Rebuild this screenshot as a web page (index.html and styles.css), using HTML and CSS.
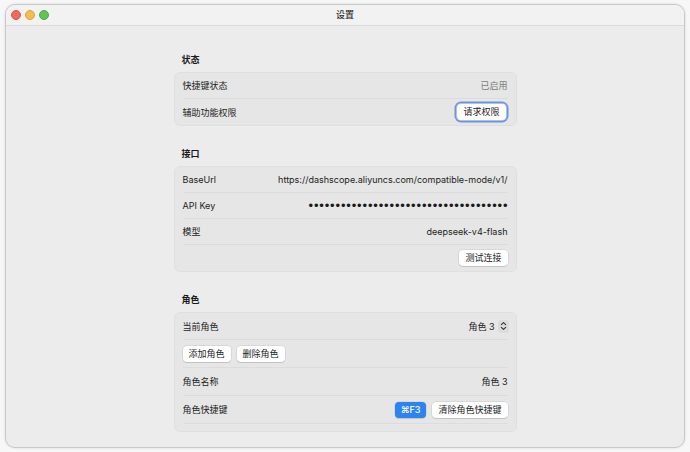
FILE: index.html
```html
<!DOCTYPE html>
<html lang="zh">
<head>
<meta charset="utf-8">
<link rel="stylesheet" href="styles.css">
</head>
<body>
<div class="window">
  <div class="titlebar">
    <div class="lights"><span class="light red"></span><span class="light yellow"></span><span class="light green"></span></div>
    <div class="title">设置</div>
    <div></div>
  </div>
  <div class="content">
    <section class="group">
      <h2 class="group-title">状态</h2>
      <div class="card">
        <div class="row"><span>快捷键状态</span><span class="muted">已启用</span></div>
        <div class="row"><span>辅助功能权限</span><button class="btn focus">请求权限</button></div>
      </div>
    </section>
    <section class="group">
      <h2 class="group-title">接口</h2>
      <div class="card">
        <div class="row"><span>BaseUrl</span><span>https://dashscope.aliyuncs.com/compatible-mode/v1/</span></div>
        <div class="row"><span>API Key</span><span class="dots">•••••••••••••••••••••••••••••••••••••</span></div>
        <div class="row"><span>模型</span><span>deepseek-v4-flash</span></div>
        <div class="row end"><button class="btn">测试连接</button></div>
      </div>
    </section>
    <section class="group">
      <h2 class="group-title">角色</h2>
      <div class="card roles">
        <div class="row first"><span>当前角色</span>
          <span class="popup">角色 3 <span class="stepper"><svg width="9" height="10" viewBox="0 0 9 10"><path d="M2.3 3.6 L4.5 1.6 L6.7 3.6 M2.3 6.4 L4.5 8.4 L6.7 6.4" fill="none" stroke="#333" stroke-width="1.1" stroke-linecap="round" stroke-linejoin="round"/></svg></span></span>
        </div>
        <div class="row start tall"><button class="btn">添加角色</button><button class="btn">删除角色</button></div>
        <div class="row tall"><span>角色名称</span><span>角色 3</span></div>
        <div class="row tall"><span>角色快捷键</span><span class="actions"><button class="btn blue">⌘F3</button><button class="btn">清除角色快捷键</button></span></div>
        <div class="tail"></div>
      </div>
    </section>
  </div>
</div>
</body>
</html>
```

FILE: styles.css
```css
* { box-sizing: border-box; }
html, body { margin: 0; padding: 0; }
body {
  background: #f7f7f7;
  font-family: "Inter", "Noto Sans CJK SC", sans-serif;
  font-size: 9px;
  color: #1c1c1c;
  width: 690px;
  height: 452px;
  overflow: hidden;
  padding: 4px 5px 4px 5px;
}
.window {
  width: 680px;
  height: 444px;
  border: 1px solid #c9c9c9;
  border-radius: 10px;
  background: #ececec;
  overflow: hidden;
  box-shadow: 0 0 3px rgba(0,0,0,0.12);
  display: flex;
  flex-direction: column;
}
.titlebar {
  height: 21px;
  flex: none;
  background: #f2f2f2;
  border-bottom: 1px solid #dadada;
  display: grid;
  grid-template-columns: 1fr auto 1fr;
  align-items: center;
}
.lights {
  display: flex;
  gap: 4px;
  padding-left: 5px;
}
.light {
  width: 10px;
  height: 10px;
  border-radius: 50%;
  display: block;
}
.red { background: #ee6a5f; border: 0.5px solid #d5564b; }
.yellow { background: #f5bd4f; border: 0.5px solid #d9a23a; }
.green { background: #61c454; border: 0.5px solid #4ea942; }
.title {
  font-family: "Noto Sans CJK SC", sans-serif;
  font-size: 9px;
  font-weight: 500;
  color: #2a2a2a;
  margin-top: -1px;
}
.content {
  flex: 1;
  display: flex;
  flex-direction: column;
  align-items: center;
  gap: 20px;
  padding-top: 26px;
}
.group {
  width: 343px;
  display: flex;
  flex-direction: column;
  gap: 4px;
}
.group-title {
  margin: 0;
  padding-left: 8px;
  font-size: 9px;
  font-weight: 700;
  line-height: 16px;
  height: 16px;
  color: #1a1a1a;
}
.card {
  background: #e6e6e6;
  border: 1px solid #dfdfdf;
  border-radius: 6px;
  padding: 0 8px;
}
.row {
  height: 26px;
  display: flex;
  align-items: center;
  justify-content: space-between;
  border-bottom: 1px solid #dcdcdc;
  white-space: nowrap;
}
.card > .row:last-child { border-bottom: none; }
.row.first { height: 27px; }
.row.tall { height: 28px; }
.row.end { justify-content: flex-end; }
.row.start { justify-content: flex-start; gap: 6px; }
.tail { height: 7px; }
.muted { color: #7b7b7b; }
.dots {
  font-family: "Liberation Sans", sans-serif;
  font-size: 13px;
  letter-spacing: 0.85px;
  margin-right: -0.85px;
  color: #1a1a1a;
}
.btn {
  font-family: "Inter", "Noto Sans CJK SC", sans-serif;
  font-size: 9px;
  color: #1c1c1c;
  background: #fff;
  border: none;
  border-radius: 4px;
  height: 16px;
  padding: 0 6px;
  box-shadow: 0 0 0 0.5px rgba(0,0,0,0.12), 0 1px 1px rgba(0,0,0,0.1);
  line-height: 16px;
}
.btn.focus {
  box-shadow: 0 0 0 1px #a8c2ec, 0 0 0 2.5px #6b96dc;
  margin-right: 2px;
}
.btn.blue {
  background: #2d84ee;
  color: #fff;
  font-weight: 500;
  padding: 0 6px;
}
.actions { display: flex; gap: 6px; }
.popup {
  display: flex;
  align-items: center;
  gap: 3px;
}
.stepper {
  width: 11px;
  height: 13px;
  border-radius: 3px;
  background: #dcdcdc;
  display: flex;
  align-items: center;
  justify-content: center;
  margin-right: -1px;
}
```
